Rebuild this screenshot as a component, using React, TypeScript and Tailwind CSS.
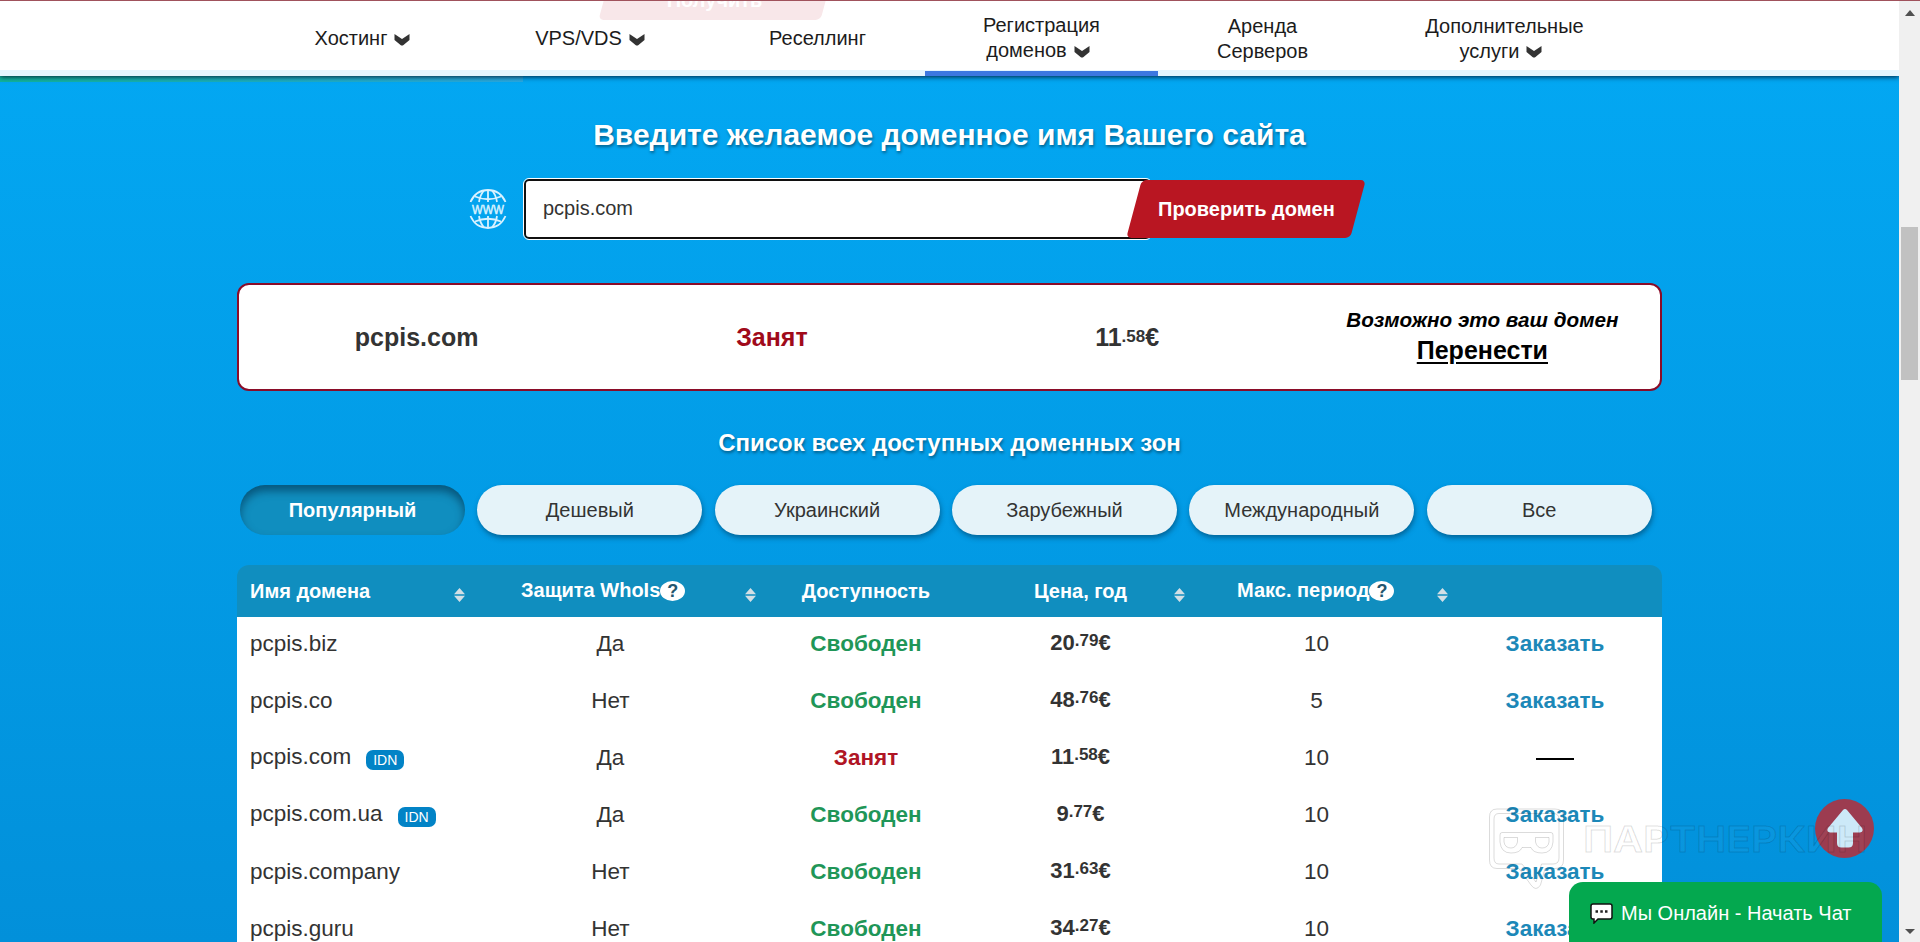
import { useState } from "react";

const navItems = [
  { lines: ["Хостинг"], arrow: true, width: "w-[216px]" },
  { lines: ["VPS/VDS"], arrow: true, width: "w-[239px]" },
  { lines: ["Реселлинг"], arrow: false, width: "w-[216px]" },
  { lines: ["Регистрация", "доменов"], arrow: true, width: "w-[233px]", active: true },
  { lines: ["Аренда", "Серверов"], arrow: false, width: "w-[208px]" },
  { lines: ["Дополнительные", "услуги"], arrow: true, width: "w-[276px]" },
];

const zones = ["Популярный", "Дешевый", "Украинский", "Зарубежный", "Международный", "Все"];

const rows = [
  { name: "pcpis.biz", whois: "Да", free: true, price: ["20", "79"], period: 10 },
  { name: "pcpis.co", whois: "Нет", free: true, price: ["48", "76"], period: 5 },
  { name: "pcpis.com", idn: true, whois: "Да", free: false, price: ["11", "58"], period: 10 },
  { name: "pcpis.com.ua", idn: true, whois: "Да", free: true, price: ["9", "77"], period: 10 },
  { name: "pcpis.company", whois: "Нет", free: true, price: ["31", "63"], period: 10 },
  { name: "pcpis.guru", whois: "Нет", free: true, price: ["34", "27"], period: 10 },
];

const columns = "grid grid-cols-[228px_291px_220px_209px_263px_214px]";

function Chevron() {
  return (
    <svg width="16" height="12" viewBox="0 0 16 12" className="ml-[7px] inline-block">
      <path d="M0.500 0 L8 5 L15.500 0 V6 L9.500 11 Q8 12 6.500 11 L0.500 6 Z" fill="#333" />
    </svg>
  );
}

function GlobeIcon() {
  return (
    <svg width="38" height="40" viewBox="0 0 38 40" fill="none" stroke="#d9f2ff" strokeWidth="1.8" className="-mt-px">
      <path d="M1.500 13 C5 5 11 1 19 1 C27 1 33 5 36.500 13" />
      <path d="M1.500 27 C5 35 11 39 19 39 C27 39 33 35 36.500 27" />
      <path d="M6 7.500 Q19 13 32 7.500 M6 32.500 Q19 27 32 32.500" />
      <path d="M19 1 V13 M19 27 V39 M15 1.500 Q11 6 10 13 M23 1.500 Q27 6 28 13 M15 38.500 Q11 34 10 27 M23 38.500 Q27 34 28 27" />
      <text x="3" y="24.500" textLength="32" lengthAdjust="spacingAndGlyphs" fontSize="12.500" fontFamily="Liberation Sans, sans-serif" fill="#d9f2ff" strokeWidth="0.5">WWW</text>
    </svg>
  );
}

function SortIcon() {
  return (
    <svg width="11" height="14" viewBox="0 0 11 14" fill="#d3dfe5" className="absolute right-0 top-[23px]">
      <path d="M5.500 0 L11 6.300 H0 Z M0 7.700 H11 L5.500 14 Z" />
    </svg>
  );
}

function Help() {
  return <span className="mt-px inline-flex h-5 w-[25px] items-center justify-center rounded-[50%] bg-white text-[18px] leading-none text-[#24566e]">?</span>;
}

function Price({ value }: { value: string[] }) {
  return (
    <span className="font-bold text-[#333]">
      {value[0]}
      <span className="relative -top-1 text-[17px]">.{value[1]}</span>€
    </span>
  );
}

function Header() {
  return (
    <header className="absolute inset-x-0 top-0 z-10 flex h-[76px] overflow-hidden border-t border-[#a0525c] bg-white pl-[254px] text-[20px] leading-[25px] text-[#1c1c1c]">
      <div className="absolute inset-x-0 bottom-0 h-[6px] bg-[#e5f6fe]" />
      <div className="absolute left-[606px] top-[-37px] flex h-14 w-[222px] -skew-x-[15deg] items-end justify-center rounded-[5px] bg-[#f8e7e9] pb-[7px] font-bold text-white">
        <span className="skew-x-[15deg] leading-[25px]">Получить</span>
      </div>
      {navItems.map((item) => (
        <a key={item.lines[0]} className={`${item.width} relative flex flex-col items-center justify-center ${item.active ? "border-b-[5px] border-[#3c78e0] pt-1" : "pl-px"}`}>
          {item.lines.map((line, i) => (
            <span key={line} className={i > 0 && item.arrow ? "-ml-[7px]" : ""}>
              {line}
              {item.arrow && i === item.lines.length - 1 ? <Chevron /> : null}
            </span>
          ))}
        </a>
      ))}
    </header>
  );
}

function DomainSearch() {
  const [domain, setDomain] = useState("pcpis.com");
  return (
    <form className="mt-[25px] flex h-[62px] items-center pl-[469px]" onSubmit={(e) => e.preventDefault()}>
      <GlobeIcon />
      <input
        value={domain}
        onChange={(e) => setDomain(e.target.value)}
        className="ml-[17px] h-[60px] w-[627px] rounded-[5px] border-2 border-[#101010] bg-white px-[17px] pb-[2px] text-[20px] text-[#333] outline outline-1 outline-white"
      />
      <button className="-ml-[17px] h-[58px] w-[224px] -skew-x-[15deg] rounded-[5px] bg-[#b91622] text-[20px] font-bold text-white">
        <span className="inline-block skew-x-[15deg]">Проверить домен</span>
      </button>
    </form>
  );
}

function ResultCard() {
  return (
    <section className="mx-auto mt-[43px] grid h-[108px] w-[1425px] grid-cols-4 items-center rounded-xl border-2 border-[#8a0c28] bg-white text-center text-[25px] font-bold text-[#333]">
      <div className="mt-[2px]">pcpis.com</div>
      <div className="mt-[2px] text-[#a00a1a]">Занят</div>
      <div className="mt-[2px]">
        <Price value={["11", "58"]} />
      </div>
      <div className="-mt-[5px] leading-[30px] text-black">
        <p className="text-[20.7px] italic">Возможно это ваш домен</p>
        <a className="underline decoration-2 underline-offset-[3px]">Перенести</a>
      </div>
    </section>
  );
}

function ZoneTabs() {
  return (
    <div className="ml-[237px] mt-[27px] grid w-[1424px] grid-cols-6 text-[20px]">
      {zones.map((zone, i) => (
        <button
          key={zone}
          className={`ml-[3px] h-[50px] w-[225px] rounded-full ${i === 0 ? "bg-[#108ebf] font-bold text-white shadow-[inset_0_6px_8px_rgba(0,50,80,0.6)]" : "bg-[#e5f3f9] text-[#333] shadow-[1px_3px_5px_rgba(0,50,80,0.5)]"}`}
        >
          {zone}
        </button>
      ))}
    </div>
  );
}

function DomainTable() {
  return (
    <section className="mx-auto mt-[30px] w-[1425px] overflow-hidden rounded-t-xl bg-[linear-gradient(#108ebf_52px,#fff_52px)] text-[#333]">
      <div className={`${columns} h-[52px] items-center text-center text-[20px] font-bold text-white`}>
        <div className="relative flex h-full items-center pl-[13px]">
          Имя домена
          <SortIcon />
        </div>
        <div className="relative flex h-full items-center pb-[2px] pl-[56px]">
          Защита WhoIs
          <Help />
          <SortIcon />
        </div>
        <div>Доступность</div>
        <div className="relative flex h-full items-center justify-center">
          Цена, год
          <SortIcon />
        </div>
        <div className="relative flex h-full items-center pb-[2px] pl-[52px]">
          Макс. период
          <Help />
          <SortIcon />
        </div>
        <div />
      </div>
      {rows.map((row) => (
        <div key={row.name} className={`${columns} h-[57px] items-center pb-[3px] text-center text-[22.5px] leading-[34px]`}>
          <div className={`flex items-center pl-[13px] ${row.idn ? "-mt-[2px]" : ""}`}>
            {row.name}
            {row.idn ? <span className="ml-[15px] mt-[5px] flex h-5 w-[38px] items-center justify-center rounded-[7px] bg-[#0283c6] text-[14px] text-white">IDN</span> : null}
          </div>
          <div>{row.whois}</div>
          <div className={`font-bold ${row.free ? "text-[#1f9658]" : "text-[#b01525]"}`}>{row.free ? "Свободен" : "Занят"}</div>
          <div className="-mt-px text-[22px]">
            <Price value={row.price} />
          </div>
          <div>{row.period}</div>
          {row.free ? <a className="font-bold text-[#1c88b8]">Заказать</a> : <span className="mx-auto mt-[2px] h-[2px] w-[38px] bg-black" />}
        </div>
      ))}
    </section>
  );
}

function Watermark() {
  return (
    <svg width="390" height="90" viewBox="0 0 390 90" fill="none" stroke="#000" strokeOpacity="0.14" className="pointer-events-none absolute left-[1485px] top-[804px] z-20">
      <path d="M12 5 H70 Q78.500 5 78.500 13 V56 Q78.500 64.500 70 64.500 H60 L55.500 81 Q51 88 46 81 L34 64.500 H12 Q4.500 64.500 4.500 56 V13 Q4.500 5 12 5 Z" />
      <path d="M14 9.500 H68 Q74 9.500 74 15 V54 Q74 60 68 60 H56.500 L51 78 L37 60 H14 Q9 60 9 54 V15 Q9 9.500 14 9.500 Z" />
      <path d="M17 28.500 H66 Q68 28.500 68 31 V38 Q67 49 57 49 Q48 49 46 43.500 H37 Q35 49 26 49 Q16 49 15 38 V31 Q15 28.500 17 28.500 Z" />
      <path d="M19 33.500 H32.500 V38 Q31 44 26 44 Q20 44 19 38 Z M50.500 33.500 H64 V38 Q63 44 57 44 Q52 44 50.500 38 Z" />
      <text x="98" y="48" fontSize="36" fontWeight="600" fontFamily="Inter, sans-serif" textLength="284" lengthAdjust="spacingAndGlyphs" fill="#fff" fillOpacity="0.05">ПАРТНЕРКИН</text>
    </svg>
  );
}

function Scrollbar() {
  return (
    <div className="relative flex w-[21px] flex-col items-center justify-between border-t border-[#a0525c] bg-[#f0f0f0] pb-2 pt-[9px]">
      <svg width="10" height="6" viewBox="0 0 10 6" fill="#505050">
        <path d="M5 0 L10 6 H0 Z" />
      </svg>
      <div className="absolute left-[2px] top-[226px] h-[153px] w-[17px] bg-[#c1c1c1]" />
      <svg width="10" height="5" viewBox="0 0 10 5" fill="#505050">
        <path d="M0 0 H10 L5 5 Z" />
      </svg>
    </div>
  );
}

export default function App() {
  return (
    <div className="flex h-[942px] w-[1920px] overflow-hidden font-['Liberation_Sans',Arial,sans-serif]">
      <main className="relative w-[1899px] overflow-hidden bg-linear-to-b from-[#03a9f4] to-[#0290da] pt-[76px]">
        <div className="absolute left-0 top-[76px] h-[6px] w-[523px] bg-linear-to-r from-[#12b59c] to-[#2aaae2]" />
        <div className="absolute inset-x-0 top-0 h-[76px] shadow-[0_1px_5px_rgba(0,20,40,0.9)]" />
        <Header />
        <h1 className="mt-[41px] text-center text-[30px] font-bold leading-[36px] text-white [text-shadow:1px_2px_3px_rgba(0,0,0,0.4)]">Введите желаемое доменное имя Вашего сайта</h1>
        <DomainSearch />
        <ResultCard />
        <h2 className="mt-[37px] text-center text-[24px] font-bold leading-[30px] text-white [text-shadow:1px_2px_3px_rgba(0,0,0,0.4)]">Список всех доступных доменных зон</h2>
        <ZoneTabs />
        <DomainTable />
        <button className="absolute left-[1815px] top-[799px] flex size-[59px] items-center justify-center rounded-full bg-[#9c3c50]">
          <svg width="36" height="39" viewBox="0 0 36 39" fill="#cce9f8">
            <path d="M16 1 Q18 -1 20 1 L35 19 Q37 23 33 23.500 H26 V34 Q26 38.500 21.500 38.500 H14.500 Q10 38.500 10 34 V23.500 H3 Q-1 23 1 19 Z" />
          </svg>
        </button>
        <Watermark />
        <button className="absolute bottom-0 left-[1569px] z-30 flex h-[60px] w-[313px] items-center rounded-t-[14px] bg-[#04a84f] pl-[21px] pt-[2px] text-[20px] text-white">
          <svg width="23" height="21" viewBox="0 0 23 21" className="mr-2">
            <path d="M3 1 H20 Q22 1 22 3 V14 Q22 16 20 16 H8 L4 20 V16 H3 Q1 16 1 14 V3 Q1 1 3 1 Z" fill="#fff" stroke="#111" strokeWidth="1.500" />
            <path d="M5.500 8.500 h2.500 M10.300 8.500 h2.500 M15 8.500 h2.500" stroke="#222" strokeWidth="2.500" />
          </svg>
          Мы Онлайн - Начать Чат
        </button>
      </main>
      <Scrollbar />
    </div>
  );
}
